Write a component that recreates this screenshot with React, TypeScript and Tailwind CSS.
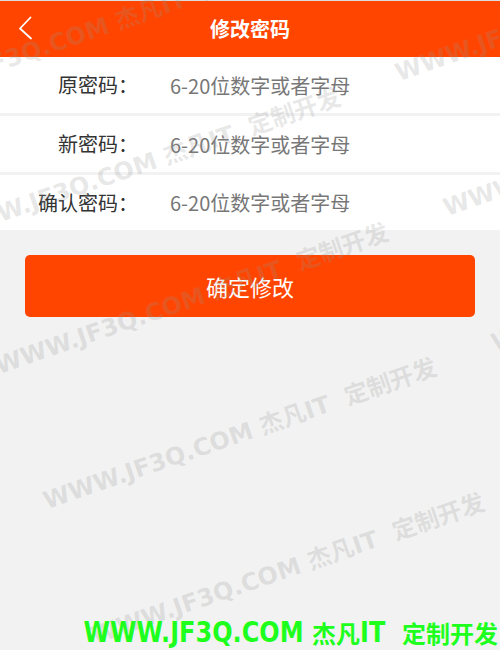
import React from "react";

const WM_TEXT = "WWW.JF3Q.COM 杰凡IT  定制开发";

function Watermarks() {
  const cls =
    "absolute whitespace-pre text-[24px] leading-none font-bold text-[rgba(150,150,150,0.22)] origin-bottom-left rotate-[-19deg] [font-family:'DejaVu_Sans','Noto_Sans_CJK_SC',sans-serif]";
  return (
    <div className="pointer-events-none absolute inset-0 overflow-hidden">
      <span className={`${cls} left-[-96px] top-[84px]`}>{WM_TEXT}</span>
      <span className={`${cls} left-[-48px] top-[219px]`}>{WM_TEXT}</span>
      <span className={`${cls} left-[0px] top-[354px]`}>{WM_TEXT}</span>
      <span className={`${cls} left-[48px] top-[489px]`}>{WM_TEXT}</span>
      <span className={`${cls} left-[96px] top-[624px]`}>{WM_TEXT}</span>
      <span className={`${cls} left-[400px] top-[61px]`}>{WM_TEXT}</span>
      <span className={`${cls} left-[448px] top-[196px]`}>{WM_TEXT}</span>
      <span className={`${cls} left-[496px] top-[331px]`}>{WM_TEXT}</span>
    </div>
  );
}

function Row({ label, last }: { label: string; last?: boolean }) {
  return (
    <div
      className={`grid grid-cols-[138px_1fr] items-center gap-[32px] bg-white ${
        last ? "h-[55px]" : "h-[56px]"
      }`}
    >
      <label className="text-right text-[20px] leading-none text-[#333333]">
        {label}
      </label>
      <input
        type="password"
        placeholder="6-20位数字或者字母"
        className="w-full bg-transparent text-[20px] leading-none outline-none placeholder:text-[#777777]"
      />
    </div>
  );
}

function Latin({ children }: { children: React.ReactNode }) {
  return <span className="inline-block origin-bottom scale-y-[1.18]">{children}</span>;
}

export default function App() {
  return (
    <div className="relative min-h-screen w-full overflow-hidden bg-[#f2f2f2] [font-family:'Noto_Sans_CJK_SC',sans-serif]">
      <div className="h-px bg-[#dcdcdc]" />
      <header className="grid h-[56px] grid-cols-[56px_1fr_56px] items-center bg-[#ff4500]">
        <button className="flex h-full items-center pl-[18px]">
          <svg width="16" height="26" viewBox="0 0 16 26" fill="none">
            <polyline
              points="12.5,1.5 2,12.5 13,22.5"
              stroke="white"
              strokeWidth="1.8"
              strokeLinecap="round"
              strokeLinejoin="round"
            />
          </svg>
        </button>
        <h1 className="text-center text-[20px] font-bold leading-none text-white">
          修改密码
        </h1>
        <div />
      </header>

      <div className="flex flex-col gap-[3px]">
        <Row label="原密码：" />
        <Row label="新密码：" />
        <Row label="确认密码：" last />
      </div>

      <div className="px-[25px] pt-[25px]">
        <button className="flex h-[62px] w-full items-center justify-center rounded-[5px] bg-[#ff4500] text-[22px] text-white">
          确定修改
        </button>
      </div>

      <Watermarks />

      <div className="pointer-events-none absolute bottom-[3px] right-[2px] whitespace-pre text-[24px] font-bold leading-none text-[#1eff1e] [font-family:'DejaVu_Sans','Noto_Sans_CJK_SC',sans-serif]">
        <Latin>WWW.JF3Q.COM</Latin> 杰凡<Latin>IT</Latin>  定制开发
      </div>
    </div>
  );
}
